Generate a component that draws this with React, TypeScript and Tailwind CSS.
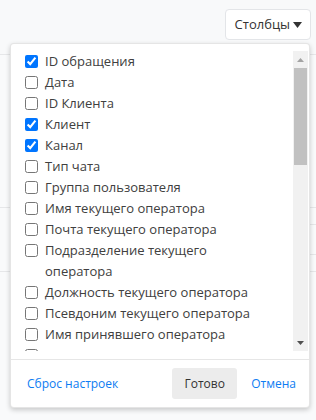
import { useState } from "react";

const columns = [
  { label: "ID обращения", checked: true },
  { label: "Дата", checked: false },
  { label: "ID Клиента", checked: false },
  { label: "Клиент", checked: true },
  { label: "Канал", checked: true },
  { label: "Тип чата", checked: false },
  { label: "Группа пользователя", checked: false },
  { label: "Имя текущего оператора", checked: false },
  { label: "Почта текущего оператора", checked: false },
  { label: "Подразделение текущего оператора", checked: false },
  { label: "Должность текущего оператора", checked: false },
  { label: "Псевдоним текущего оператора", checked: false },
  { label: "Имя принявшего оператора", checked: false },
  { label: "Почта принявшего оператора", checked: false },
];

const ColumnItem = ({ label, checked }: { label: string; checked: boolean }) => {
  const [on, setOn] = useState(checked);
  return (
    <label className="flex items-start gap-[7px] pl-[14px] leading-[21px]">
      <input
        type="checkbox"
        checked={on}
        onChange={() => setOn(!on)}
        className="mt-[4px] h-[13px] w-[13px] shrink-0 accent-[#0075ff]"
      />
      <span className="max-w-[222px] text-[#404040]">{label}</span>
    </label>
  );
};

const App = () => {
  return (
    <div className="relative h-[420px] w-[316px] overflow-hidden bg-[#f9fafb] font-['Open_Sans',sans-serif] text-[13px]">
      {/* page behind the menu */}
      <div className="flex h-[55px] items-start justify-end border-b border-[#e6e7e9] bg-[#f8f9fa] pr-[5px] pt-[9px]">
        <button className="flex h-[31px] items-center gap-[3px] rounded-[4px] border border-[#e3e5e8] bg-white pl-[9px] pr-[8px] text-[13px] text-[#333]">
          Столбцы
          <svg width="9" height="6" viewBox="0 0 9 6">
            <path d="M0 0h9L4.5 6z" fill="#333" />
          </svg>
        </button>
      </div>
      <div className="h-[153px] border-b border-[#e6e7e9]" />
      <div className="ml-[40px] h-[17px] border-b border-[#e6e7e9]" />
      <div className="ml-[40px] h-[30px] border-b border-[#e6e7e9]" />
      <div className="h-[17px] border-b border-[#e6e7e9]" />

      {/* columns menu */}
      <div className="absolute left-[10px] top-[43px] flex h-[365px] w-[300px] flex-col rounded-[4px] border border-black/10 bg-white shadow-[0_2px_5px_rgba(0,0,0,0.2)]">
        <div className="mt-[7px] flex h-[300px]">
          <div className="flex-1 overflow-hidden">
            {columns.map((c) => (
              <ColumnItem key={c.label} label={c.label} checked={c.checked} />
            ))}
          </div>
          <div className="mr-[1px] flex w-[15px] flex-col items-center bg-[#f1f1f1]">
            <div className="flex h-[17px] items-center justify-center">
              <svg width="7" height="4" viewBox="0 0 7 4">
                <path d="M0 4h7L3.5 0z" fill="#a3a3a3" />
              </svg>
            </div>
            <div className="h-[97px] w-[13px] bg-[#c1c1c1]" />
            <div className="flex-1" />
            <div className="flex h-[17px] items-center justify-center">
              <svg width="7" height="4" viewBox="0 0 7 4">
                <path d="M0 0h7L3.5 4z" fill="#505050" />
              </svg>
            </div>
          </div>
        </div>
        <div className="mt-[8px] flex flex-1 items-center border-t border-[#e6e6e6] pl-[16px] pr-[13px] text-[12px]">
          <span className="text-[#0d7cf2]">Сброс настроек</span>
          <span className="flex-1" />
          <span className="flex h-[31px] w-[65px] items-center justify-center rounded-[3px] bg-[#ececec] text-[#333]">
            Готово
          </span>
          <span className="ml-[14px] text-[#0d7cf2]">Отмена</span>
        </div>
      </div>
    </div>
  );
};

export default App;
